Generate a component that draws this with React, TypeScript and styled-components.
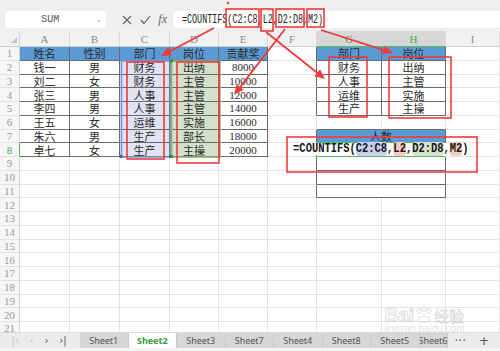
import React from 'react';
import styled, { createGlobalStyle } from 'styled-components';

const Global = createGlobalStyle`
  html, body { margin: 0; padding: 0; background: #fff; }
  body { width: 500px; height: 351px; overflow: hidden; }
`;

const GRID = '#e3e3e3';
const DARK = '#6a6a6a';
const BLUE = '#5b9bd5';
const LAV = '#dfe3f4';
const SAGE = '#d4e0cb';
const GREEN = '#5cb85c';

const Page = styled.div`
  position: relative;
  width: 500px;
  height: 351px;
  overflow: hidden;
  display: flex;
  flex-direction: column;
  background: #fff;
  font-family: "Liberation Serif", serif;
`;

const FormulaBar = styled.div`
  height: 31px;
  flex: none;
  box-sizing: border-box;
  padding: 11px 0 3px 5px;
  display: flex;
  align-items: stretch;
  background: #efefef;
`;

const NameBox = styled.div`
  width: 101px;
  box-sizing: border-box;
  background: #fff;
  border-radius: 3px;
  display: flex;
  align-items: center;
  padding: 0 4px 0 0;
  font: 10px "Liberation Mono", monospace;
  color: #555;
`;

const NameLabel = styled.span`
  flex: 1;
  text-align: center;
`;

const Chevron = styled.span`
  color: #aaa;
  font: 8px "DejaVu Sans", sans-serif;
`;

const IconGroup = styled.div`
  width: 67px;
  flex: none;
  display: flex;
  align-items: center;
  justify-content: space-between;
  padding: 0 6px 0 16px;
  box-sizing: border-box;
  color: #666;
`;

const Fx = styled.span`
  font: italic 12px "Liberation Serif", serif;
  color: #666;
`;

const FormulaInput = styled.div`
  flex: 1;
  background: #fff;
  border-radius: 3px 0 0 3px;
  display: flex;
  align-items: center;
  padding-left: 9px;
  overflow: hidden;
`;

const BarText = styled.span`
  display: inline-block;
  font: 12px "Liberation Mono", monospace;
  color: #222;
  white-space: nowrap;
  transform: scaleX(0.7);
  transform-origin: left center;
`;

const Sheet = styled.div`
  flex: 1;
  display: grid;
  grid-template-columns: 20px 50px 50px 50px 49px 49px 49px 65px 64px 1fr;
  grid-template-rows: 16px repeat(21, 13.75px);
  overflow: hidden;
`;

const Corner = styled.div`
  background: #f1f1f1;
  border-right: 1px solid #d4d4d4;
  border-bottom: 1px solid #cfcfcf;
  display: flex;
  align-items: flex-end;
  justify-content: flex-end;
  padding: 0 2px 3px 0;
`;

const ColHead = styled.div<{ $active?: boolean }>`
  background: ${p => (p.$active ? '#d7d7d7' : '#f1f1f1')};
  border-right: 1px solid #d9d9d9;
  border-bottom: 1px solid ${p => (p.$active ? GREEN : '#cfcfcf')};
  display: flex;
  align-items: center;
  justify-content: center;
  font: 11px "Liberation Serif", serif;
  color: ${p => (p.$active ? '#4aa84a' : '#8a8a8a')};
`;

const RowHead = styled.div<{ $active?: boolean }>`
  background: #f6f6f6;
  border-right: 1px solid ${p => (p.$active ? GREEN : '#d4d4d4')};
  border-bottom: 1px solid ${GRID};
  display: flex;
  align-items: center;
  justify-content: center;
  font: 11px "Liberation Serif", serif;
  line-height: 12px;
  overflow: hidden;
  color: ${p => (p.$active ? '#4aa84a' : '#9a9a9a')};
`;

const Cell = styled.div<{ $span: number; $fill: string; $r: string; $b: string; $num?: boolean }>`
  grid-column: span ${p => p.$span};
  background: ${p => p.$fill};
  border-right: 1px solid ${p => p.$r};
  border-bottom: 1px solid ${p => p.$b};
  min-width: 0;
  display: flex;
  align-items: center;
  justify-content: center;
  white-space: nowrap;
  overflow: visible;
  color: #2a2a2a;
  font: ${p => (p.$num ? '11px "Liberation Serif", serif' : '11px "Noto Sans CJK SC", sans-serif')};
  line-height: 12px;
`;

const Editor = styled.span`
  position: relative;
  z-index: 2;
  display: inline-block;
  background: #fff;
  font: bold 12px "Liberation Mono", monospace;
  line-height: 11px;
  color: #151515;
  white-space: nowrap;
  transform: scaleX(0.87);
`;

const Ref = styled.span<{ $bg: string }>`
  background: ${p => p.$bg};
  border-radius: 4px;
`;

const TabBar = styled.div`
  height: 15px;
  flex: none;
  display: flex;
  align-items: stretch;
  background: #ebebeb;
  border-top: 1px solid #dcdcdc;
`;

const Nav = styled.div`
  width: 80px;
  flex: none;
  display: flex;
  align-items: center;
  justify-content: space-around;
  padding: 0 8px 0 6px;
  box-sizing: border-box;
`;

const NavBtn = styled.span<{ $dim?: boolean }>`
  font: 10px "DejaVu Sans", sans-serif;
  color: ${p => (p.$dim ? '#c8c8c8' : '#555')};
`;

const Tab = styled.div<{ $active?: boolean; $w?: number }>`
  width: ${p => p.$w ?? 48.5}px;
  flex: none;
  box-sizing: border-box;
  display: flex;
  align-items: center;
  justify-content: center;
  overflow: hidden;
  white-space: nowrap;
  background: ${p => (p.$active ? '#fff' : '#d6d6d6')};
  color: ${p => (p.$active ? '#2f9e3c' : '#555')};
  font: ${p => (p.$active ? 'bold' : 'normal')} 9px "Noto Sans", sans-serif;
  border-right: 1px solid #c8c8c8;
`;

const TabTools = styled.div`
  flex: 1;
  display: flex;
  align-items: center;
  gap: 13px;
  padding-left: 7px;
  font: 12px "DejaVu Sans", sans-serif;
  color: #555;
`;

const Bottom = styled.div`
  height: 3px;
  flex: none;
  background: #f4f4f4;
`;

const Overlay = styled.svg`
  position: absolute;
  left: 0;
  top: 0;
  pointer-events: none;
  z-index: 5;
`;

const Watermark = styled.div`
  position: absolute;
  left: 384px;
  top: 304px;
  z-index: 4;
  display: flex;
  flex-direction: column;
  align-items: center;
  pointer-events: none;
`;

const WmTop = styled.div`
  display: flex;
  align-items: center;
  gap: 1px;
`;

const WmBai = styled.span`
  font: bold 19px "Liberation Sans", sans-serif;
  color: transparent;
  -webkit-text-stroke: 1px rgba(200, 200, 200, 0.6);
`;

const WmCn = styled.span`
  font: 15px "Noto Sans CJK SC", sans-serif;
  color: transparent;
  -webkit-text-stroke: 0.8px rgba(200, 200, 200, 0.6);
`;

const WmUrl = styled.span`
  font: 10px "Liberation Sans", sans-serif;
  margin-top: -3px;
  color: rgba(205, 205, 205, 0.6);
`;

const COLS = ['A', 'B', 'C', 'D', 'E', 'F', 'G', 'H', 'I'];

const LEFT: string[][] = [
  ['姓名', '性别', '部门', '岗位', '贡献奖'],
  ['钱一', '男', '财务', '出纳', '8000'],
  ['刘二', '女', '财务', '主管', '10000'],
  ['张三', '男', '人事', '主管', '12000'],
  ['李四', '男', '人事', '主管', '14000'],
  ['王五', '女', '运维', '实施', '16000'],
  ['朱六', '男', '生产', '部长', '18000'],
  ['卓七', '女', '生产', '主操', '20000'],
];

const RIGHT: string[][] = [
  ['部门', '岗位'],
  ['财务', '出纳'],
  ['人事', '主管'],
  ['运维', '实施'],
  ['生产', '主操'],
];

type CellDef = { key: string; span: number; fill: string; r: string; b: string; text?: React.ReactNode; num?: boolean };

function buildRow(r: number): CellDef[] {
  const out: CellDef[] = [];
  for (let c = 0; c < 9; c++) {
    const d: CellDef = { key: `${r}-${c}`, span: 1, fill: '#fff', r: GRID, b: GRID };
    if (r >= 1 && r <= 8 && c <= 4) {
      d.r = DARK;
      d.b = DARK;
      d.text = LEFT[r - 1][c];
      d.num = c === 4 && r > 1;
      if (r === 1) d.fill = BLUE;
      else if (c === 2) d.fill = LAV;
      else if (c === 3) d.fill = SAGE;
    }
    if (c === 5 && ((r >= 1 && r <= 5) || (r >= 7 && r <= 11))) d.r = DARK;
    if (c >= 6 && c <= 7) {
      if (r >= 1 && r <= 5) {
        d.r = DARK;
        d.b = DARK;
        d.text = RIGHT[r - 1][c - 6];
        if (r === 1) d.fill = BLUE;
      } else if (r === 6) {
        d.b = DARK;
      } else if (r >= 7 && r <= 11) {
        if (c === 7) continue;
        d.span = 2;
        d.r = DARK;
        d.b = DARK;
        if (r === 7) {
          d.fill = BLUE;
          d.text = '人数';
          d.b = GREEN;
        }
        if (r === 8) {
          d.b = GREEN;
          d.r = '#fff';
          d.text = (
            <Editor>
              =COUNTIFS(<Ref $bg="#c6d0f0">C2:C8</Ref>,<Ref $bg="#f3cbc2">L2</Ref>,<Ref $bg="#d3e3cc">D2:D8</Ref>,<Ref $bg="#f3cbc2">M2</Ref>)
            </Editor>
          );
        }
      }
    }
    out.push(d);
  }
  return out;
}

function arrowHead(x1: number, y1: number, x2: number, y2: number, len = 10, w = 4.5) {
  const dx = x2 - x1;
  const dy = y2 - y1;
  const L = Math.hypot(dx, dy);
  const ux = dx / L;
  const uy = dy / L;
  const bx = x2 - ux * len;
  const by = y2 - uy * len;
  const px = -uy * w;
  const py = ux * w;
  return `${x2},${y2} ${bx + px},${by + py} ${bx - px},${by - py}`;
}

const ARROWS: [number, number, number, number][] = [
  [214, 28, 161, 56],
  [266, 32, 325, 79],
  [285, 29, 234, 95],
  [321, 30, 393, 53],
];

const RED_BOXES: [number, number, number, number][] = [
  [226, 9, 33, 18],
  [261, 9, 12, 22],
  [276, 9, 28, 18],
  [307, 9, 17, 18],
  [127, 62, 37, 97],
  [177, 62, 42, 101],
  [329, 57, 38, 60],
  [389, 57, 62, 61],
  [287, 137, 190, 35],
];

export default function App() {
  const rows = Array.from({ length: 21 }, (_, i) => i + 1);
  const RED = '#ef3b3b';
  return (
    <Page>
      <Global />
      <FormulaBar>
        <NameBox>
          <NameLabel>SUM</NameLabel>
          <Chevron>⌄</Chevron>
        </NameBox>
        <IconGroup>
          <svg width="10" height="10" viewBox="0 0 10 10">
            <path d="M1 1 L9 9 M9 1 L1 9" stroke="#666" strokeWidth="1.2" fill="none" />
          </svg>
          <svg width="11" height="10" viewBox="0 0 11 10">
            <path d="M1 5 L4 8.5 L10 1" stroke="#666" strokeWidth="1.2" fill="none" />
          </svg>
          <Fx>fx</Fx>
        </IconGroup>
        <FormulaInput>
          <BarText>=COUNTIFS(C2:C8,L2,D2:D8,M2)</BarText>
        </FormulaInput>
      </FormulaBar>
      <Sheet>
        <Corner>
          <svg width="6" height="6" viewBox="0 0 6 6">
            <path d="M6 0 L6 6 L0 6 Z" fill="#c4c4c4" />
          </svg>
        </Corner>
        {COLS.map(c => (
          <ColHead key={c} $active={c === 'G' || c === 'H'}>
            {c}
          </ColHead>
        ))}
        {rows.map(r => (
          <React.Fragment key={r}>
            <RowHead $active={r === 8}>{r}</RowHead>
            {buildRow(r).map(d => (
              <Cell key={d.key} $span={d.span} $fill={d.fill} $r={d.r} $b={d.b} $num={d.num}>
                {d.text}
              </Cell>
            ))}
          </React.Fragment>
        ))}
      </Sheet>
      <TabBar>
        <Nav>
          <NavBtn $dim>|‹</NavBtn>
          <NavBtn $dim>‹</NavBtn>
          <NavBtn>›</NavBtn>
          <NavBtn>›|</NavBtn>
        </Nav>
        <Tab>Sheet1</Tab>
        <Tab $active>Sheet2</Tab>
        <Tab>Sheet3</Tab>
        <Tab>Sheet7</Tab>
        <Tab>Sheet4</Tab>
        <Tab>Sheet8</Tab>
        <Tab>Sheet5</Tab>
        <Tab $w={28}>Sheet6</Tab>
        <TabTools>
          <span>···</span>
          <span>+</span>
        </TabTools>
      </TabBar>
      <Bottom />
      <Watermark>
        <WmTop>
          <WmBai>Bai</WmBai>
          <svg width="18" height="16" viewBox="0 0 18 16">
            <g fill="none" stroke="rgba(200,200,200,0.6)" strokeWidth="1">
              <ellipse cx="4" cy="4" rx="2" ry="2.5" />
              <ellipse cx="9" cy="2.5" rx="2" ry="2.2" />
              <ellipse cx="14" cy="4" rx="2" ry="2.5" />
              <path d="M3 13 C3 8 15 8 15 13 C15 16 3 16 3 13 Z" />
            </g>
          </svg>
          <WmCn>经验</WmCn>
        </WmTop>
        <WmUrl>jingyan.baidu.com</WmUrl>
      </Watermark>
      <Overlay width="500" height="351" viewBox="0 0 500 351">
        <rect x="121.5" y="61" width="49" height="96" fill="none" stroke="#8196dc" strokeWidth="1.5" />
        <rect x="119.5" y="155" width="3" height="3" fill="#3a56c0" />
        <rect x="169" y="155" width="3" height="3" fill="#3a56c0" />
        <rect x="171.5" y="61" width="48.5" height="96" fill="none" stroke="#86b06c" strokeWidth="1.5" />
        <rect x="170" y="59.5" width="3" height="3" fill="#3f8a2c" />
        <rect x="170" y="155" width="3" height="3" fill="#3f8a2c" />
        <circle cx="228" cy="3" r="1.3" fill={RED} />
        {RED_BOXES.map(([x, y, w, h], i) => (
          <rect key={i} x={x} y={y} width={w} height={h} fill="none" stroke={RED} strokeWidth="1.6" />
        ))}
        {ARROWS.map(([x1, y1, x2, y2], i) => {
          const L = Math.hypot(x2 - x1, y2 - y1);
          const ex = x2 - ((x2 - x1) / L) * 8;
          const ey = y2 - ((y2 - y1) / L) * 8;
          return (
            <g key={i}>
              <line x1={x1} y1={y1} x2={ex} y2={ey} stroke={RED} strokeWidth="1.8" />
              <polygon points={arrowHead(x1, y1, x2, y2)} fill={RED} />
            </g>
          );
        })}
      </Overlay>
    </Page>
  );
}
